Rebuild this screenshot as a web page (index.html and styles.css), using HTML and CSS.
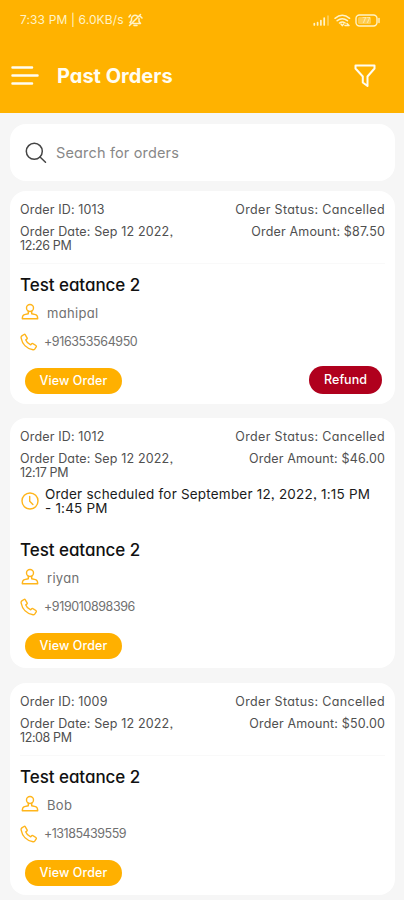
FILE: index.html
```html
<!DOCTYPE html>
<html lang="en">
<head>
<meta charset="utf-8">
<meta name="viewport" content="width=device-width, initial-scale=1">
<title>Past Orders</title>
<link rel="stylesheet" href="styles.css">
</head>
<body>
<svg class="sprite" aria-hidden="true">
  <symbol id="user" viewBox="0 0 18 18"><circle cx="9" cy="5" r="3.500"/><path d="M7.300 8.200v2.500L3.500 11.600C2 12 1.300 13.500 1.300 15.700h15.400c0-2.200-.7-3.700-2.200-4.100l-3.800-.9V8.200"/></symbol>
  <symbol id="phone" viewBox="0 0 18 18"><path d="M1.500 3.200 4 1.500c.5-.3 1-.2 1.300.3l1.800 3c.3.5.2 1-.3 1.300l-1 .8c.8 2.200 2.600 4 4.900 5l.9-1.100c.3-.4.900-.5 1.300-.2l3 1.900c.5.300.6.900.3 1.300l-1.500 2.300c-.4.500-1 .7-1.700.6C6.800 15.700 2.200 11 1.100 4.800c-.1-.6 0-1.200.4-1.600Z"/></symbol>
  <symbol id="clock" viewBox="0 0 18 18"><circle cx="9" cy="9" r="8"/><path d="M8.700 4.500V9.300l3.200 3.200"/></symbol>
</svg>
<header class="header">
  <div class="status">
    <span class="status-text">7:33 PM | 6.0KB/s</span>
    <svg class="mute" viewBox="0 0 16 16"><path d="M4 11.500 3 10.500l1.500-2V6.500a3.500 3.500 0 0 1 6-2.200M12 6.500v3l1.500 2H6M7 13.500h3M2.500 13.500l11-11M2 5l1.500-2M12.500 3.500 15 6"/></svg>
    <svg class="signal" viewBox="0 0 17 11"><path d="M1.300 10V8.500M4.600 10V7.500M7.900 10V5.500M11.200 10V3"/><path class="dim" d="M15 10V1"/></svg>
    <svg class="wifi" viewBox="0 0 17 13"><path d="M1 4.300q7.300-6 14.600 0M3.200 6.700q5.100-4 10.200 0M5.500 9q2.800-2 5.600 0"/><path d="m7 10 1.300 1.600L9.600 10M11 11.500h4M13 9.500l2 2"/></svg>
    <svg class="battery" viewBox="0 0 26 13"><rect x="1" y="1" width="21" height="11" rx="3.500"/><path d="M24 4.500v4"/><rect class="charge" x="3" y="3" width="13" height="7" rx="1.500"/><text x="11.500" y="9.200">77</text></svg>
  </div>
  <div class="bar">
    <svg class="menu" viewBox="0 0 28 22"><path d="M1.500 2.500h19.500M1.500 10.500h25M1.500 18.500h19.500"/></svg>
    <h1>Past Orders</h1>
    <svg class="filter" viewBox="0 0 22 24"><path d="M1.500 1.500h19v3L13.500 12.500V22L8.800 18.500V12.500L1.500 4.500Z"/></svg>
  </div>
</header>
<main>
  <div class="search">
    <svg viewBox="0 0 22 22"><circle cx="9.300" cy="9.300" r="8"/><path d="m15 15 5.500 5.300"/></svg>
    <span>Search for orders</span>
  </div>
  <article class="card first">
    <div class="meta">
      <div class="left"><p>Order ID: 1013</p><p class="date">Order Date: Sep 12 2022,<br><span class="time">12:26 PM</span></p></div>
      <div class="right"><p class="state">Order Status: Cancelled</p><p>Order Amount: $87.50</p></div>
    </div>
    <h2>Test eatance 2</h2>
    <div class="person"><svg class="icon"><use href="#user"/></svg><span>mahipal</span></div>
    <div class="tel"><svg class="icon"><use href="#phone"/></svg><span>+916353564950</span></div>
    <div class="actions"><span class="view">View Order</span><span class="refund">Refund</span></div>
  </article>
  <article class="card">
    <div class="meta plain">
      <div class="left"><p>Order ID: 1012</p><p class="date">Order Date: Sep 12 2022,<br><span class="time">12:17 PM</span></p></div>
      <div class="right"><p class="state">Order Status: Cancelled</p><p>Order Amount: $46.00</p></div>
    </div>
    <div class="schedule"><svg class="icon"><use href="#clock"/></svg><p>Order scheduled for September 12, 2022, 1:15 PM<br>- 1:45 PM</p></div>
    <h2>Test eatance 2</h2>
    <div class="person"><svg class="icon"><use href="#user"/></svg><span>riyan</span></div>
    <div class="tel"><svg class="icon"><use href="#phone"/></svg><span>+919010898396</span></div>
    <div class="actions"><span class="view">View Order</span></div>
  </article>
  <article class="card">
    <div class="meta">
      <div class="left"><p>Order ID: 1009</p><p class="date">Order Date: Sep 12 2022,<br><span class="time">12:08 PM</span></p></div>
      <div class="right"><p class="state">Order Status: Cancelled</p><p>Order Amount: $50.00</p></div>
    </div>
    <h2>Test eatance 2</h2>
    <div class="person"><svg class="icon"><use href="#user"/></svg><span>Bob</span></div>
    <div class="tel"><svg class="icon"><use href="#phone"/></svg><span class="short">+13185439559</span></div>
    <div class="actions"><span class="view">View Order</span></div>
  </article>
</main>
</body>
</html>
```
FILE: styles.css
```css
* { box-sizing: border-box; margin: 0; padding: 0; }
body {
  width: 404px;
  height: 900px;
  overflow: hidden;
  background: #f6f6f6;
  color: #505050;
  font: 400 12.5px/14px Inter, "Liberation Sans", sans-serif;
  font-feature-settings: "cv11", "ss03";
  white-space: nowrap;
}
svg { flex: none; fill: none; stroke: currentColor; stroke-linecap: round; stroke-linejoin: round; }
.sprite { display: none; }
.header { height: 113px; background: #ffb200; color: #fffdf2; }
.status { display: flex; align-items: center; height: 40px; padding: 0 23px 0 20px; color: #fff3c8; }
.status-text { font-size: 12px; letter-spacing: 0.12px; width: 107px; }
.mute { width: 16px; height: 16px; stroke-width: 1.5; }
.signal { width: 17px; height: 11px; margin-left: auto; stroke-width: 1.700; }
.dim { opacity: .45; }
.wifi { width: 17px; height: 13px; margin-left: 4px; stroke-width: 1.500; }
.battery { width: 26px; height: 13px; margin-left: 4px; stroke-width: 1.400; }
.battery .charge { fill: currentColor; stroke: none; opacity: .4; }
.battery text { fill: currentColor; stroke: none; font-size: 7px; text-anchor: middle; }
.bar { display: flex; align-items: center; height: 72px; padding: 0 28px 0 11px; }
.menu { width: 28px; height: 22px; stroke-width: 2.500; }
.bar h1 { margin-left: 18px; font-size: 20px; line-height: 24px; font-weight: 700; }
.filter { width: 22px; height: 24px; margin-left: auto; stroke-width: 2; }
main { padding: 11px 9px 0 10px; }
.search { display: flex; align-items: center; height: 57px; padding-left: 15px; border-radius: 16px; background: #fff; color: #888; font-size: 14.5px; letter-spacing: 0.16px; }
.search svg { width: 22px; height: 22px; margin-right: 9px; stroke-width: 1.500; color: #444; }
.card { margin-bottom: 15px; padding: 12px 10px 9px; border-radius: 16px; background: #fff; }
.first { margin-top: 10px; margin-bottom: 14px; padding-bottom: 10px; }
.meta { display: flex; justify-content: space-between; height: 61px; border-bottom: 1px solid #f9f9f9; letter-spacing: 0.16px; }
.meta p + p { margin-top: 8px; }
.meta .date { line-height: 14px; }
.time { letter-spacing: -0.4px; }
.right { text-align: right; }
.state { letter-spacing: 0.35px; }
.plain { height: 57px; border: 0; }
.schedule { display: flex; height: 42px; color: #1b1b1b; font-size: 13.5px; letter-spacing: 0.2px; }
.schedule .icon { margin: 5px 6px 0 1px; }
.icon { width: 18px; height: 18px; color: #ffb51b; stroke-width: 1.400; }
.card h2 { margin-top: 9px; height: 24px; color: #111; font-size: 17px; line-height: 24px; font-weight: 500; letter-spacing: -0.05px; }
.person, .tel { display: flex; align-items: center; margin-left: 1px; color: #707070; }
.person { height: 32px; }
.person span { margin-left: 8px; font-size: 13px; letter-spacing: 0.3px; }
.person .icon { margin-top: -2px; }
.tel { height: 26px; margin-left: 0; }
.tel span { margin-left: 6px; letter-spacing: -0.4px; }
.tel .short { letter-spacing: -0.5px; }
.actions { display: flex; align-items: flex-end; justify-content: space-between; height: 28px; margin: 11px 3px 0 5px; }
.view, .refund { display: flex; align-items: center; justify-content: center; border-radius: 14px; background: #ffb000; color: #fff; font-weight: 500; }
.view { width: 97px; height: 26px; letter-spacing: 0.1px; }
.refund { width: 73px; height: 28px; background: #b0001d; }
```
